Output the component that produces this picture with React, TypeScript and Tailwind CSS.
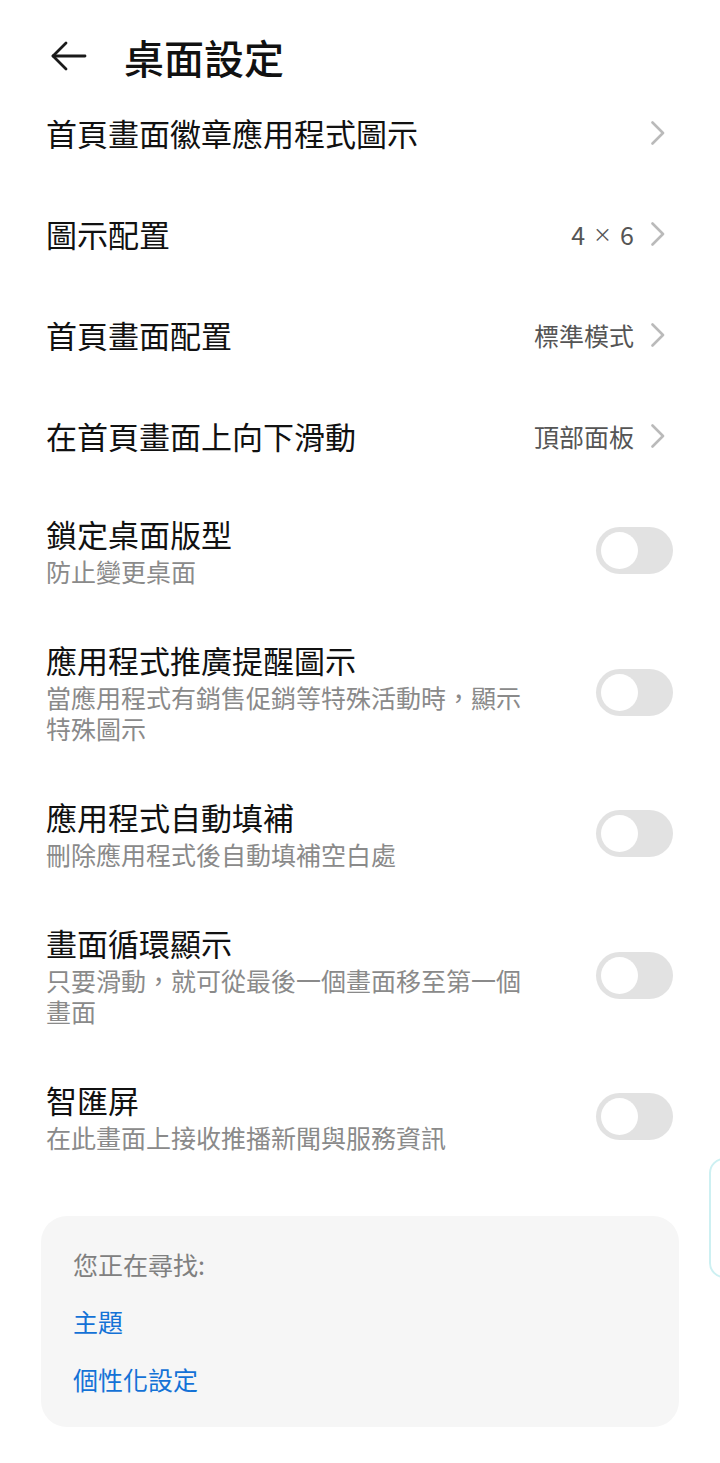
import React from "react";

const FONT = '"Noto Sans CJK TC", "Noto Sans", Roboto, sans-serif';

function Chevron() {
  return (
    <svg width="16" height="24" viewBox="0 0 16 24" fill="none" className="shrink-0">
      <path d="M2.5 1.5 L13 12 L2.5 22.5" stroke="#bababa" strokeWidth="2.6" strokeLinecap="round" strokeLinejoin="round" />
    </svg>
  );
}

function NavRow({ title, value }: { title: string; value?: React.ReactNode }) {
  return (
    <div className="h-[101px] flex items-center justify-between pl-[46px] pr-[54px]">
      <div className="text-[31px] leading-[40px] text-[#111]">{title}</div>
      <div className="flex items-center gap-[16px]">
        {value && <div className="text-[25px] leading-[32px] text-[#555]">{value}</div>}
        <Chevron />
      </div>
    </div>
  );
}

function Toggle() {
  return (
    <div className="shrink-0 w-[77px] h-[47px] rounded-full bg-[#e2e2e2] flex items-center px-[5px]">
      <div className="w-[37px] h-[37px] rounded-full bg-white" />
    </div>
  );
}

function ToggleRow({ title, sub }: { title: string; sub: string }) {
  return (
    <div className="flex items-center justify-between pl-[46px] pr-[47px] pt-[28px] pb-[25px]">
      <div className="w-[492px]">
        <div className="text-[31px] leading-[40px] text-[#111]">{title}</div>
        <div className="mt-[2px] text-[25px] leading-[31px] text-[#8a8a8a]">{sub}</div>
      </div>
      <Toggle />
    </div>
  );
}

export default function App() {
  return (
    <div className="relative w-[720px] min-h-[1463px] bg-white overflow-hidden" style={{ fontFamily: FONT }}>
      <div className="h-[82px] flex items-start pt-[35px] pl-[50px]">
        <svg width="37" height="32" viewBox="0 0 37 32" fill="none" className="mt-[5px]">
          <path d="M35 16 H3" stroke="#1a1a1a" strokeWidth="2.8" strokeLinecap="round" />
          <path d="M16 3 L3 16 L16 29" stroke="#1a1a1a" strokeWidth="2.8" strokeLinecap="round" strokeLinejoin="round" />
        </svg>
        <div className="ml-[37px] text-[40px] leading-[44px] font-medium text-[#111]">桌面設定</div>
      </div>

      <NavRow title="首頁畫面徽章應用程式圖示" />
      <NavRow
        title="圖示配置"
        value={
          <span className="flex items-center">
            <span>4</span>
            <span className="mx-[8px] text-[19px]">×</span>
            <span>6</span>
          </span>
        }
      />
      <NavRow title="首頁畫面配置" value="標準模式" />
      <NavRow title="在首頁畫面上向下滑動" value="頂部面板" />

      <ToggleRow title="鎖定桌面版型" sub="防止變更桌面" />
      <ToggleRow title="應用程式推廣提醒圖示" sub="當應用程式有銷售促銷等特殊活動時，顯示特殊圖示" />
      <ToggleRow title="應用程式自動填補" sub="刪除應用程式後自動填補空白處" />
      <ToggleRow title="畫面循環顯示" sub="只要滑動，就可從最後一個畫面移至第一個畫面" />
      <ToggleRow title="智匯屏" sub="在此畫面上接收推播新聞與服務資訊" />

      <div className="mx-[41px] mt-[38px] rounded-[26px] bg-[#f6f6f6] pl-[32px] pt-[30px] pb-[30px]">
        <div className="text-[25px] leading-[36px] text-[#808080]">您正在尋找:</div>
        <div className="mt-[21px] text-[25px] leading-[36px] text-[#1472d6]">主題</div>
        <div className="mt-[22px] text-[25px] leading-[36px] text-[#1472d6]">個性化設定</div>
      </div>

      <div className="absolute left-[709px] top-[1158px] w-[30px] h-[120px] rounded-[15px] border-2 border-[#cdf0f2]" />
    </div>
  );
}
